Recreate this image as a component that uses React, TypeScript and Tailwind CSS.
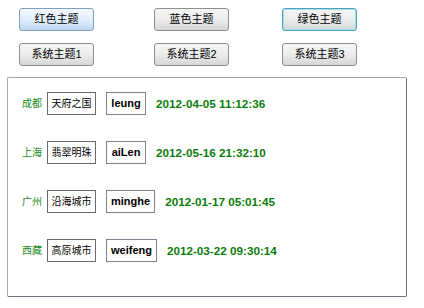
const rows = [
  { city: '成都', title: '天府之国', user: 'leung', time: '2012-04-05 11:12:36' },
  { city: '上海', title: '翡翠明珠', user: 'aiLen', time: '2012-05-16 21:32:10' },
  { city: '广州', title: '沿海城市', user: 'minghe', time: '2012-01-17 05:01:45' },
  { city: '西藏', title: '高原城市', user: 'weifeng', time: '2012-03-22 09:30:14' },
];

const font = { fontFamily: '"Liberation Sans", "Noto Sans CJK SC", sans-serif' };

function ThemeButton({ label, variant, className = '' }: { label: string; variant?: 'hover' | 'focus'; className?: string }) {
  let cls = 'border-[#8e8f8f] bg-gradient-to-b from-[#f6f6f6] via-[#ececec] to-[#d6d6d6]';
  if (variant === 'hover') cls = 'border-[#7fa0c2] bg-gradient-to-b from-[#f3f8fd] via-[#e2eefb] to-[#bfd7f0]';
  if (variant === 'focus') cls = 'border-[#4fa3bd] shadow-[inset_0_0_0_1px_#a6dceb] bg-gradient-to-b from-[#f6f6f6] via-[#ececec] to-[#d6d6d6]';
  return (
    <button className={`block w-[75px] h-[23px] rounded-[3px] border text-[11px] text-black leading-none ${cls} ${className}`}>
      {label}
    </button>
  );
}

export default function App() {
  return (
    <div className="w-[424px] h-[308px] bg-white" style={font}>
      <div className="flex pt-[8px] pl-[19px]">
        <ThemeButton label="红色主题" variant="hover" />
        <ThemeButton label="蓝色主题" className="ml-[60px]" />
        <ThemeButton label="绿色主题" variant="focus" className="ml-[53px]" />
      </div>
      <div className="flex pt-[12px] pl-[19px]">
        <ThemeButton label="系统主题1" />
        <ThemeButton label="系统主题2" className="ml-[60px]" />
        <ThemeButton label="系统主题3" className="ml-[53px]" />
      </div>

      <div className="mt-[11px] ml-[7px] w-[400px] h-[220px] border border-[#a0a6ae] border-r-[#6d7580] border-b-[#6d7580] rounded-[2px] flex flex-col gap-[26px] pt-[14px] pl-[14px]">
        {rows.map((r) => (
          <div key={r.city} className="flex items-center h-[23px]">
            <span className="text-[10px] text-[#1a8a1a] w-[20px] whitespace-nowrap">{r.city}</span>
            <span className="ml-[5px] w-[49px] h-[23px] border border-[#6a6a6a] flex items-center justify-center text-[10px] text-black whitespace-nowrap">
              {r.title}
            </span>
            <span className="ml-[10px] h-[23px] px-[4px] min-w-[40px] border border-[#7a838e] flex items-center justify-center text-[11px] font-bold text-black">
              {r.user}
            </span>
            <span className="ml-[10px] text-[11.7px] font-bold text-[#0a7d0a] whitespace-nowrap">{r.time}</span>
          </div>
        ))}
      </div>
    </div>
  );
}
